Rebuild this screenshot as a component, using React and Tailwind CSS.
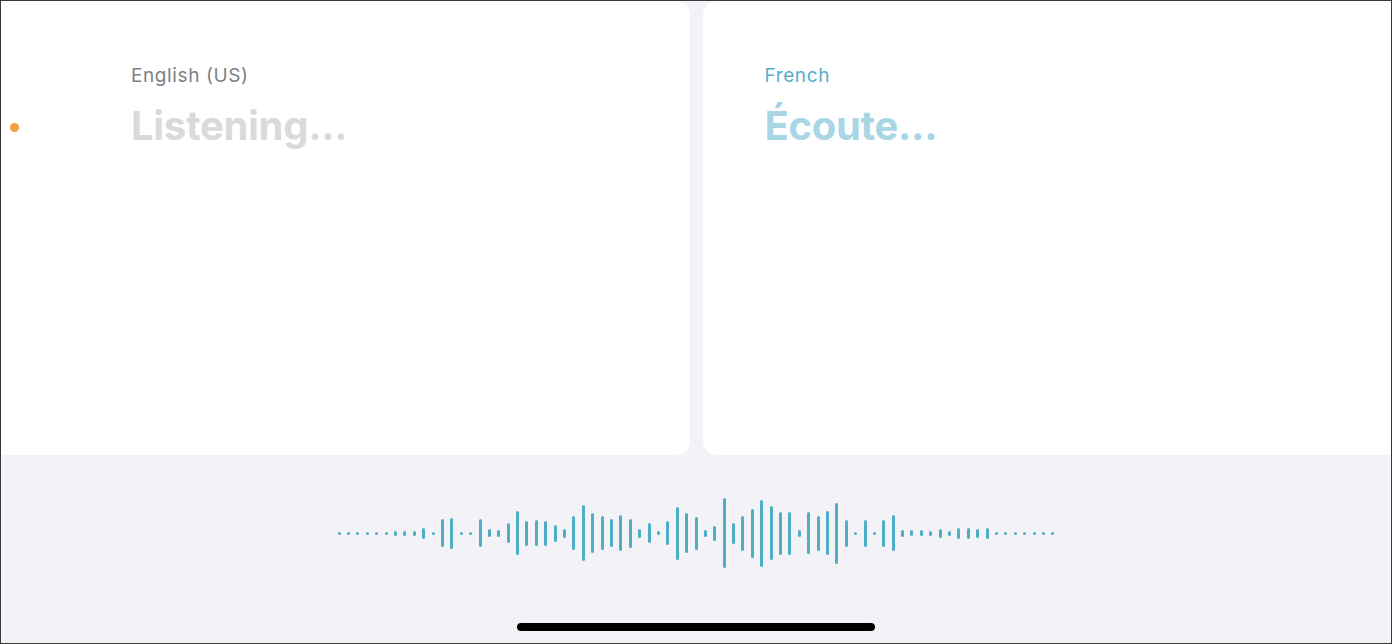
const bars = [
  3, 3, 3, 3, 3, 3, 5, 5, 5, 11, 3, 28, 31, 3, 3, 28, 8, 7, 20, 44, 25, 26, 25, 17, 9, 34,
  56, 40, 34, 28, 36, 29, 9, 20, 4, 24, 53, 40, 33, 7, 15, 70, 21, 35, 49, 67, 54, 43, 43, 7, 42, 35,
  44, 61, 27, 3, 27, 3, 27, 36, 7, 6, 6, 5, 9, 5, 11, 11, 9, 11, 3, 3, 3, 3, 3, 3, 3,
];

function Panel({ lang, text, langColor, textColor, className, children }) {
  return (
    <div className={`relative min-w-0 bg-white ${className}`}>
      {children}
      <div className="pt-[63px]">
        <p className={`text-[19px] leading-6 font-normal tracking-[0.6px] ${langColor}`}>{lang}</p>
        <p className={`mt-[14px] text-[40px] leading-[48px] font-bold tracking-[-0.3px] ${textColor}`}>{text}</p>
      </div>
    </div>
  );
}

export default function App() {
  return (
    <div
      className="box-border flex h-[644px] w-[1392px] flex-col overflow-hidden border border-[#3a3a3a] bg-[#f2f2f7]"
      style={{ fontFamily: "Inter, 'Noto Sans', sans-serif" }}
    >
      <div className="grid h-[454px] grid-cols-2 gap-[13px]">
        <Panel
          lang="English (US)"
          text="Listening..."
          langColor="text-[#7f7f83]"
          textColor="text-[#dadada]"
          className="rounded-r-[14px] pl-[130px]"
        >
          <span className="absolute left-[9px] top-[122px] h-[9px] w-[9px] rounded-full bg-[#f3a03f]" />
        </Panel>
        <Panel
          lang="French"
          text="Écoute..."
          langColor="text-[#58aec9]"
          textColor="text-[#a8d6e4]"
          className="rounded-l-[14px] pl-[62px]"
        />
      </div>

      <div className="flex flex-1 flex-col items-center">
        <div className="mt-[42px] flex h-[72px] items-center justify-center gap-[6.4px]">
          {bars.map((h, i) => (
            <span key={i} className="w-[3px] rounded-full bg-[#4eaec6]" style={{ height: h }} />
          ))}
        </div>
        <div className="mt-[54px] h-[8px] w-[358px] rounded-full bg-black" />
      </div>
    </div>
  );
}
